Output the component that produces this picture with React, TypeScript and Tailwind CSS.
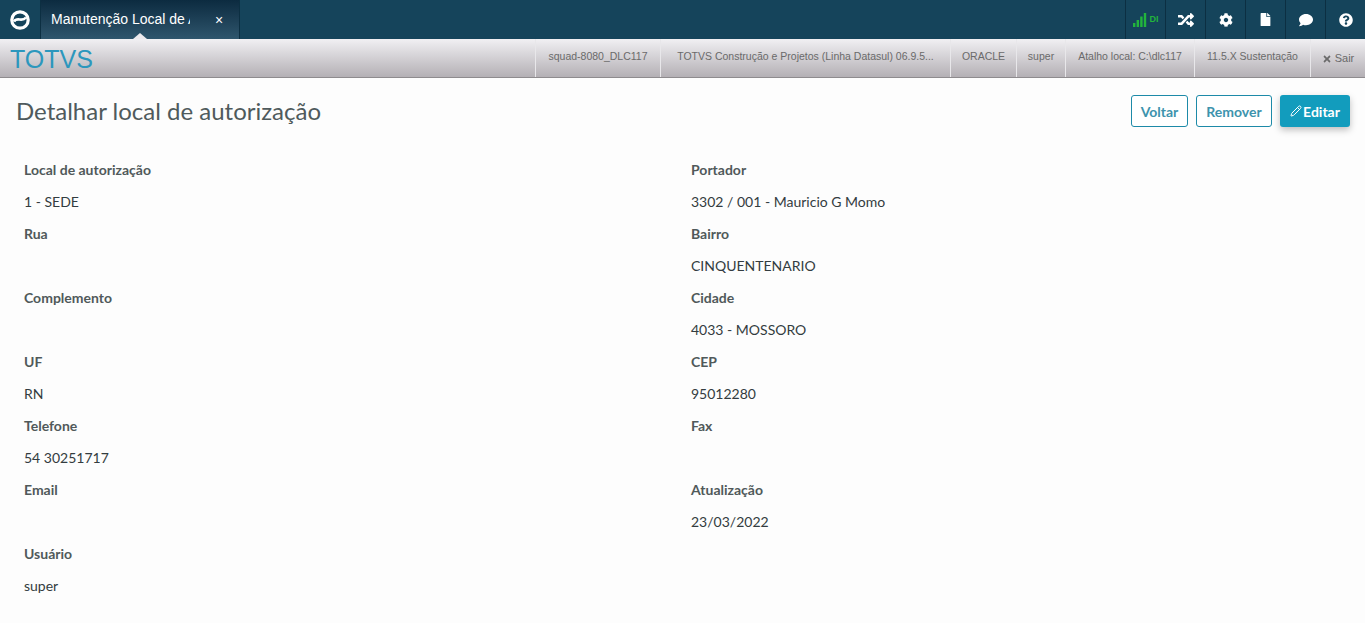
import { FaCog, FaComment, FaFile, FaQuestionCircle, FaRandom, FaTimes } from "react-icons/fa";
import { Pencil } from "lucide-react";
import type { ReactNode } from "react";

const infoItems = [
  { label: "squad-8080_DLC117", width: "w-[125px]" },
  { label: "TOTVS Construção e Projetos (Linha Datasul) 06.9.5...", width: "w-[290px]" },
  { label: "ORACLE", width: "w-[66px]" },
  { label: "super", width: "w-[49px]" },
  { label: "Atalho local: C:\\dlc117", width: "w-[129px]" },
  { label: "11.5.X Sustentação", width: "w-[116px]" }
];

const fields = [
  { label: "Local de autorização", value: "1 - SEDE" },
  { label: "Portador", value: "3302 / 001 - Mauricio G Momo" },
  { label: "Rua", value: "" },
  { label: "Bairro", value: "CINQUENTENARIO" },
  { label: "Complemento", value: "" },
  { label: "Cidade", value: "4033 - MOSSORO" },
  { label: "UF", value: "RN" },
  { label: "CEP", value: "95012280" },
  { label: "Telefone", value: "54 30251717" },
  { label: "Fax", value: "" },
  { label: "Email", value: "" },
  { label: "Atualização", value: "23/03/2022" },
  { label: "Usuário", value: "super" }
];

const Logo = () => (
  <svg width="22" height="22" viewBox="0 0 22 22" fill="none">
    <circle cx="11" cy="11" r="8.2" stroke="white" strokeWidth="3.2" />
    <path d="M5 12.5 C8 7.5 13 13.5 17 8.5" stroke="white" strokeWidth="2.6" />
  </svg>
);

const Signal = () => (
  <svg width="14" height="14" viewBox="0 0 14 14" fill="#22b53c">
    <rect x="0" y="10" width="2.4" height="4" />
    <rect x="3.6" y="7" width="2.4" height="7" />
    <rect x="7.2" y="3.5" width="2.4" height="10.5" />
    <rect x="10.8" y="0" width="2.4" height="14" />
  </svg>
);

const ToolButton = ({ children, wide = false }: { children: ReactNode; wide?: boolean }) => (
  <div className={`flex h-full items-center justify-center border-l border-[#0c2f42] text-white ${wide ? "w-[40px]" : "w-[40px]"}`}>
    {children}
  </div>
);

const App = () => {
  return (
    <div className="h-[623px] w-[1365px] overflow-hidden bg-[#fdfdfd] font-['Lato','Noto_Sans',sans-serif]">
      <div className="flex h-[39px] bg-[#15445b]">
        <div className="flex w-[40px] items-center justify-center">
          <Logo />
        </div>
        <div className="relative flex w-[200px] items-center border-x border-[#0c2f42] bg-gradient-to-b from-[#0c2b40] to-[#2f566d] pl-[10px] font-['Liberation_Sans',sans-serif] text-[14px] text-white">
          <span className="w-[139px] overflow-hidden whitespace-nowrap">Manutenção Local de Autorização</span>
          <span className="ml-[25px] text-[14px] leading-none">×</span>
          <div className="absolute bottom-0 left-[92px] h-0 w-0 border-x-[7px] border-b-[6px] border-x-transparent border-b-[#eceaed]" />
        </div>
        <div className="ml-auto flex h-full">
          <ToolButton>
            <div className="flex items-center gap-[3px]">
              <Signal />
              <span className="font-['Liberation_Sans',sans-serif] text-[9px] font-bold text-[#22b53c]">DI</span>
            </div>
          </ToolButton>
          <ToolButton><FaRandom size={16} /></ToolButton>
          <ToolButton><FaCog size={14} /></ToolButton>
          <ToolButton><FaFile size={13} /></ToolButton>
          <ToolButton><FaComment size={14} /></ToolButton>
          <ToolButton><FaQuestionCircle size={14} /></ToolButton>
        </div>
      </div>

      <div className="flex h-[39px] items-stretch border-b border-[#8e8b8e] bg-gradient-to-b from-[#f1f0f3] to-[#b4b0b5] font-['Liberation_Sans',sans-serif]">
        <div className="pl-[10px] text-[25px] leading-[41px] text-[#2c97bd]">TOTVS</div>
        <div className="ml-auto flex">
          {infoItems.map(item => (
            <div
              key={item.label}
              className={`flex items-center justify-center whitespace-nowrap border-l border-[#e8e7ea] pb-[3px] text-[10.5px] text-[#6a6a6a] ${item.width}`}
            >
              {item.label}
            </div>
          ))}
          <div className="flex w-[55px] items-center justify-center gap-[3px] border-l border-[#e8e7ea] pt-[1px] text-[11px] text-[#6a6a6a]">
            <FaTimes size={10} />
            Sair
          </div>
        </div>
      </div>

      <div className="flex items-center justify-between pl-[16px] pr-[15px] pt-[17px]">
        <h1 className="text-[24px] leading-[32px] text-[#4f5a5c]">Detalhar local de autorização</h1>
        <div className="flex gap-[8px] text-[14px] font-bold">
          <button className="h-[32px] w-[57px] rounded-[3px] border border-[#1d8aa8] bg-white text-[#3d93ad]">Voltar</button>
          <button className="h-[32px] w-[76px] rounded-[3px] border border-[#1d8aa8] bg-white text-[#3d93ad]">Remover</button>
          <button className="flex h-[32px] w-[70px] items-center justify-center gap-[1px] rounded-[3px] bg-[#129cbd] text-white shadow-[0_3px_7px_rgba(0,0,0,0.25)]">
            <Pencil size={12} />
            Editar
          </button>
        </div>
      </div>

      <div className="grid grid-cols-[667px_1fr] pl-[24px] pt-[27px] text-[14px]">
        {fields.map(field => (
          <div key={field.label}>
            <div className="h-[32px] font-bold leading-[32px] text-[#50595a]">{field.label}</div>
            <div className="h-[32px] leading-[32px] text-[#333c40]">{field.value}</div>
          </div>
        ))}
      </div>
    </div>
  );
};

export default App;
